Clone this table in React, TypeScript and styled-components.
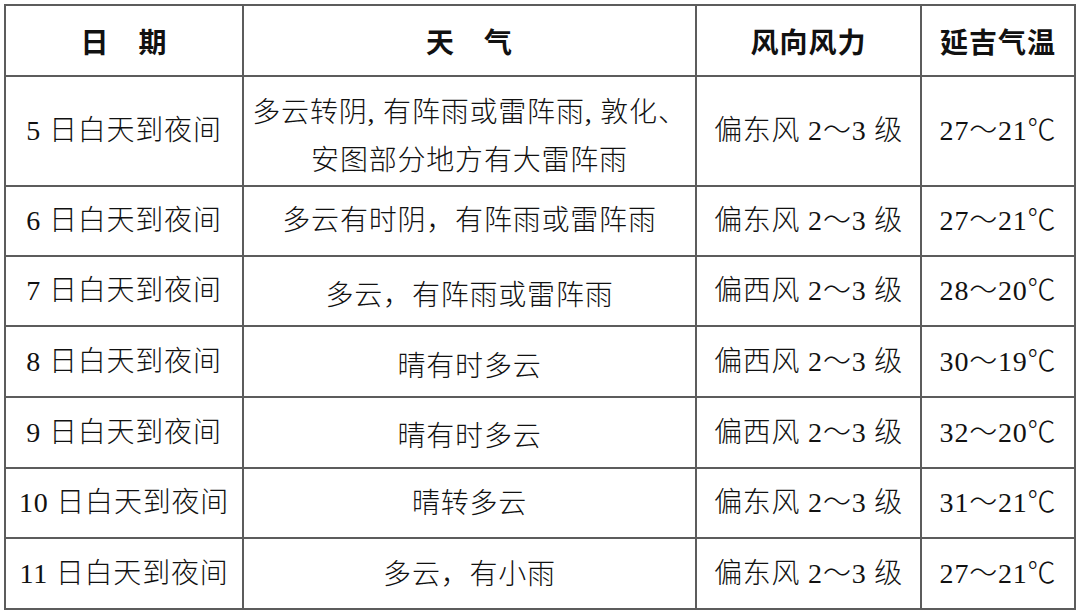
import React from "react";
import styled, { createGlobalStyle } from "styled-components";

const Global = createGlobalStyle`
  html, body { margin: 0; padding: 0; background: #ffffff; }
  body { font-family: "Liberation Serif", "Noto Sans CJK SC", serif; }
`;

const Page = styled.div`
  width: 1080px;
  height: 615px;
  padding: 4px 0 0 4px;
  box-sizing: border-box;
  background: #fff;
  overflow: hidden;
`;

const Table = styled.table`
  border-collapse: collapse;
  width: 1070px;
  table-layout: fixed;
  color: #111;
  font-family: "Liberation Serif", "Noto Sans CJK SC", serif;
  font-size: 28px;
`;

const Col = styled.col<{ $w: number }>`
  width: ${(p) => p.$w}px;
`;

const HeadCell = styled.th`
  border: 2px solid #5c5c5c;
  padding: 0;
  text-align: center;
  vertical-align: middle;
  font-weight: 700;
  color: #111;
  font-family: "Noto Sans CJK SC", sans-serif;
  line-height: 1;
  letter-spacing: 1px;
`;

const Row = styled.tr<{ $h: number }>`
  height: ${(p) => p.$h}px;
`;

const Cell = styled.td<{ $shift?: number }>`
  border: 2px solid #5c5c5c;
  padding: ${(p) => (p.$shift ? `${p.$shift * 2}px 0 0` : "0")};
  text-align: center;
  vertical-align: middle;
  line-height: 48px;
  font-weight: 300;
  letter-spacing: 0.8px;
  white-space: nowrap;
`;

const rows: {
  date: string;
  weather: React.ReactNode;
  wind: string;
  temp: string;
  h: number;
  shift?: number;
}[] = [
  {
    date: "5 日白天到夜间",
    weather: (
      <>
        多云转阴, 有阵雨或雷阵雨, 敦化、
        <br />
        安图部分地方有大雷阵雨
      </>
    ),
    wind: "偏东风 2～3 级",
    temp: "27～21℃",
    h: 110,
    shift: 6,
  },
  { date: "6 日白天到夜间", weather: "多云有时阴，有阵雨或雷阵雨", wind: "偏东风 2～3 级", temp: "27～21℃", h: 70 },
  { date: "7 日白天到夜间", weather: "多云，有阵雨或雷阵雨", wind: "偏西风 2～3 级", temp: "28～20℃", h: 70, shift: 5 },
  { date: "8 日白天到夜间", weather: "晴有时多云", wind: "偏西风 2～3 级", temp: "30～19℃", h: 71, shift: 5 },
  { date: "9 日白天到夜间", weather: "晴有时多云", wind: "偏西风 2～3 级", temp: "32～20℃", h: 71, shift: 4 },
  { date: "10 日白天到夜间", weather: "晴转多云", wind: "偏东风 2～3 级", temp: "31～21℃", h: 70, shift: 1 },
  { date: "11 日白天到夜间", weather: "多云，有小雨", wind: "偏东风 2～3 级", temp: "27～21℃", h: 71, shift: 1 },
];

export default function App() {
  return (
    <Page>
      <Global />
      <Table>
        <colgroup>
          <Col $w={238} />
          <Col $w={453} />
          <Col $w={225} />
          <Col $w={154} />
        </colgroup>
        <thead>
          <Row $h={71}>
            <HeadCell>日　期</HeadCell>
            <HeadCell>天　气</HeadCell>
            <HeadCell>风向风力</HeadCell>
            <HeadCell>延吉气温</HeadCell>
          </Row>
        </thead>
        <tbody>
          {rows.map((r) => (
            <Row key={r.date} $h={r.h}>
              <Cell>{r.date}</Cell>
              <Cell $shift={r.shift}>{r.weather}</Cell>
              <Cell>{r.wind}</Cell>
              <Cell>{r.temp}</Cell>
            </Row>
          ))}
        </tbody>
      </Table>
    </Page>
  );
}
